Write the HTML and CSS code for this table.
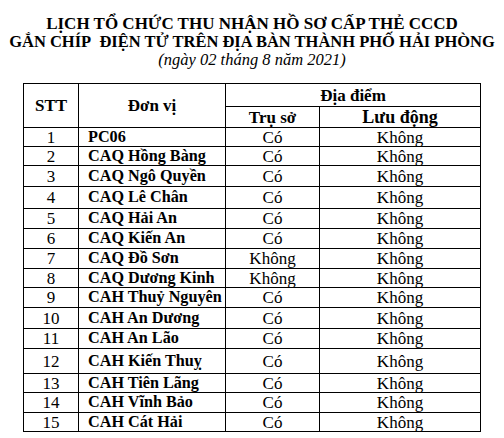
FILE: index.html
```html
<!DOCTYPE html>
<html lang="vi">
<head>
<meta charset="utf-8">
<title>Lịch tổ chức thu nhận hồ sơ cấp thẻ CCCD</title>
<link rel="stylesheet" href="styles.css">
</head>
<body>
<div class="page">
  <header class="title">
    <div class="t-line t-first">LỊCH TỔ CHỨC THU NHẬN HỒ SƠ CẤP THẺ CCCD</div>
    <div class="t-line">GẮN CHÍP&nbsp; ĐIỆN TỬ TRÊN ĐỊA BÀN THÀNH PHỐ HẢI PHÒNG</div>
    <div class="t-date">(ngày 02 tháng 8 năm 2021)</div>
  </header>
  <table class="sched">
    <colgroup>
      <col class="c-stt">
      <col class="c-unit">
      <col class="c-hq">
      <col class="c-mob">
    </colgroup>
    <thead>
      <tr class="h1">
        <th rowspan="2">STT</th>
        <th rowspan="2">Đơn vị</th>
        <th colspan="2">Địa điểm</th>
      </tr>
      <tr class="h2">
        <th>Trụ sở</th>
        <th class="mob">Lưu động</th>
      </tr>
    </thead>
    <tbody>
      <tr class="r19"><td class="n">1</td><td class="u">PC06</td><td>Có</td><td>Không</td></tr>
      <tr class="r19"><td class="n">2</td><td class="u">CAQ Hồng Bàng</td><td>Có</td><td>Không</td></tr>
      <tr class="r21"><td class="n">3</td><td class="u">CAQ Ngô Quyền</td><td>Có</td><td>Không</td></tr>
      <tr class="r22"><td class="n">4</td><td class="u">CAQ Lê Chân</td><td>Có</td><td>Không</td></tr>
      <tr class="r20"><td class="n">5</td><td class="u">CAQ Hải An</td><td>Có</td><td>Không</td></tr>
      <tr class="r20"><td class="n">6</td><td class="u">CAQ Kiến An</td><td>Có</td><td>Không</td></tr>
      <tr class="r20"><td class="n">7</td><td class="u">CAQ Đồ Sơn</td><td>Không</td><td>Không</td></tr>
      <tr class="r19"><td class="n">8</td><td class="u">CAQ Dương Kinh</td><td>Không</td><td>Không</td></tr>
      <tr class="r20"><td class="n">9</td><td class="u">CAH Thuỷ Nguyên</td><td>Có</td><td>Không</td></tr>
      <tr class="r21"><td class="n">10</td><td class="u">CAH An Dương</td><td>Có</td><td>Không</td></tr>
      <tr class="r20"><td class="n">11</td><td class="u">CAH An Lão</td><td>Có</td><td>Không</td></tr>
      <tr class="r25"><td class="n">12</td><td class="u">CAH Kiến Thuỵ</td><td>Có</td><td>Không</td></tr>
      <tr class="r19"><td class="n">13</td><td class="u">CAH Tiên Lãng</td><td>Có</td><td>Không</td></tr>
      <tr class="r20"><td class="n">14</td><td class="u">CAH Vĩnh Bảo</td><td>Có</td><td>Không</td></tr>
      <tr class="r19"><td class="n">15</td><td class="u">CAH Cát Hải</td><td>Có</td><td>Không</td></tr>
    </tbody>
  </table>
</div>
</body>
</html>
```
FILE: styles.css
```css
html, body {
  margin: 0;
  padding: 0;
  background: #ffffff;
}
body {
  font-family: "Liberation Serif", "Times New Roman", serif;
  color: #000000;
}
.page {
  width: 504px;
  height: 438px;
  overflow: hidden;
}
.title {
  padding-top: 15px;
  text-align: center;
  line-height: 18px;
}
.t-line {
  font-weight: bold;
  font-size: 16.5px;
  white-space: nowrap;
}
.t-first {
  font-size: 17px;
}
.t-date {
  font-style: italic;
  font-size: 16.5px;
}
.sched {
  margin: 14px 0 0 23px;
  border-collapse: collapse;
  table-layout: fixed;
  width: 457px;
  font-size: 17px;
  line-height: 1;
}
.c-stt { width: 55px; }
.c-unit { width: 147px; }
.c-hq { width: 94px; }
.c-mob { width: 161px; }
.sched th,
.sched td {
  border: 1px solid #000000;
  padding: 0;
  text-align: center;
  vertical-align: middle;
  white-space: nowrap;
}
.sched th {
  font-weight: bold;
}
.sched th.mob {
  font-size: 18px;
}
.h1 { height: 23px; }
.h2 { height: 21px; }
.sched td.u {
  text-align: left;
  padding-left: 9px;
  font-weight: bold;
  font-size: 16.2px;
}
.r19 { height: 19px; }
.r20 { height: 20px; }
.r21 { height: 21px; }
.r22 { height: 22px; }
.r25 { height: 25px; }
```
